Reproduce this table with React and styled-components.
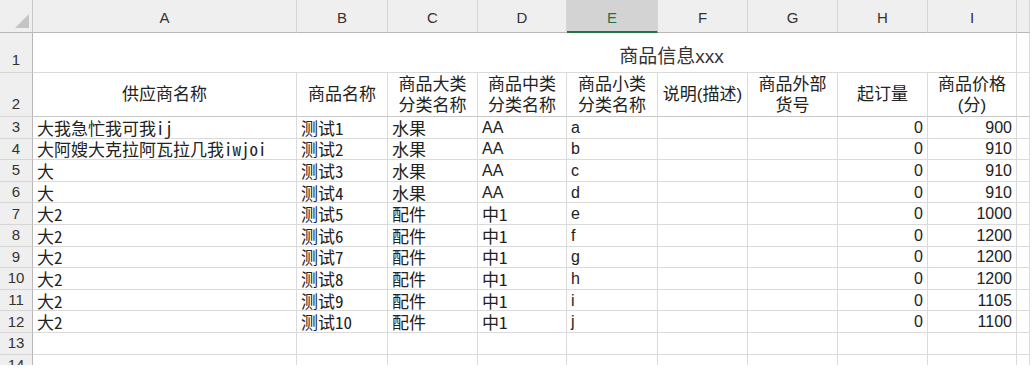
import React from "react";
import styled, { createGlobalStyle, css } from "styled-components";

const GlobalStyle = createGlobalStyle`
  html, body {
    margin: 0;
    padding: 0;
    background: #ffffff;
  }
`;

const CJK = `"Liberation Sans", "Noto Sans CJK SC", sans-serif`;
const SONG = `"Noto Sans Mono CJK SC", "Noto Sans CJK SC", "Liberation Mono", monospace`;

const COLS = ["A", "B", "C", "D", "E", "F", "G", "H", "I", ""];
const SELECTED_COL = "E";

const Sheet = styled.div`
  display: grid;
  grid-template-columns: 33px 264px 91px 90px 89px 91px 90px 90px 90px 89px 13px;
  grid-template-rows: 33px 40px 44px repeat(12, 21.6px);
  width: 1030px;
  height: 365px;
  overflow: hidden;
  background: #ffffff;
  color: #222;
`;

const Corner = styled.div`
  position: relative;
  background: #efefef;
  border-right: 1px solid #c8c8c8;
  border-bottom: 1px solid #b8b8b8;
  box-sizing: border-box;

  &::after {
    content: "";
    position: absolute;
    right: 3px;
    bottom: 4px;
    width: 14px;
    height: 14px;
    background: #c4c4c4;
    clip-path: polygon(100% 0, 100% 100%, 0 100%);
  }
`;

const ColHeader = styled.div`
  display: flex;
  align-items: center;
  justify-content: center;
  box-sizing: border-box;
  background: #efefef;
  border-right: 1px solid #d6d6d6;
  border-bottom: 1px solid #b8b8b8;
  font-family: "Liberation Sans", Arial, sans-serif;
  font-size: 15px;
  color: #333;
  padding-top: 2px;

  ${(p) =>
    p.$selected &&
    css`
      background: #d3d3d3;
      color: #217346;
      border-bottom: 2px solid #217346;
      padding-top: 3px;
    `}
`;

const RowHeader = styled.div`
  display: flex;
  justify-content: center;
  align-items: ${(p) => (p.$tall ? "flex-end" : "center")};
  padding-bottom: ${(p) => (p.$tall ? "3px" : "0")};
  box-sizing: border-box;
  background: #efefef;
  border-right: 1px solid #b8b8b8;
  border-bottom: 1px solid #d6d6d6;
  font-family: "Liberation Sans", Arial, sans-serif;
  font-size: 15px;
  line-height: 18px;
  color: #333;
`;

const TitleCell = styled.div`
  grid-column: 2 / span 9;
  display: flex;
  align-items: center;
  justify-content: center;
  padding: 4px 0 0 294px;
  box-sizing: border-box;
  border-right: 1px solid #dadada;
  border-bottom: 1px solid #dadada;
  font-family: ${CJK};
  font-size: 19px;
  color: #333;
`;

const HeadCell = styled.div`
  display: flex;
  align-items: center;
  justify-content: center;
  text-align: center;
  box-sizing: border-box;
  border-right: 1px solid #dadada;
  border-bottom: 1px solid #c8c8c8;
  font-family: ${CJK};
  font-size: 17px;
  line-height: 21px;
  color: #222;
  white-space: pre-line;
`;

const Cell = styled.div`
  display: flex;
  align-items: center;
  justify-content: ${(p) => (p.$align === "right" ? "flex-end" : "flex-start")};
  padding: 1px 4px 0;
  box-sizing: border-box;
  border-right: 1px solid #dadada;
  border-bottom: 1px solid #dadada;
  font-family: ${(p) => (p.$song ? SONG : `"Liberation Sans", Arial, sans-serif`)};
  font-size: ${(p) => (p.$song ? "17px" : "16px")};
  line-height: 20px;
  white-space: nowrap;
  color: #222;
`;

const HEADINGS = [
  "供应商名称",
  "商品名称",
  "商品大类\n分类名称",
  "商品中类\n分类名称",
  "商品小类\n分类名称",
  "说明(描述)",
  "商品外部\n货号",
  "起订量",
  "商品价格\n(分)",
];

const ITEMS = [
  ["大我急忙我可我ij", "测试1", "水果", "AA", "a", 0, 900],
  ["大阿嫂大克拉阿瓦拉几我iwjoi", "测试2", "水果", "AA", "b", 0, 910],
  ["大", "测试3", "水果", "AA", "c", 0, 910],
  ["大", "测试4", "水果", "AA", "d", 0, 910],
  ["大2", "测试5", "配件", "中1", "e", 0, 1000],
  ["大2", "测试6", "配件", "中1", "f", 0, 1200],
  ["大2", "测试7", "配件", "中1", "g", 0, 1200],
  ["大2", "测试8", "配件", "中1", "h", 0, 1200],
  ["大2", "测试9", "配件", "中1", "i", 0, 1105],
  ["大2", "测试10", "配件", "中1", "j", 0, 1100],
];

const isLatin = (s) => /^[A-Za-z0-9]+$/.test(s);

function ItemRow({ n, item }) {
  const [supplier, name, big, mid, small, minQty, price] = item;
  return (
    <>
      <RowHeader>{n}</RowHeader>
      <Cell $song>{supplier}</Cell>
      <Cell $song>{name}</Cell>
      <Cell $song>{big}</Cell>
      <Cell $song={!isLatin(mid)}>{mid}</Cell>
      <Cell>{small}</Cell>
      <Cell />
      <Cell />
      <Cell $align="right">{minQty}</Cell>
      <Cell $align="right">{price}</Cell>
      <Cell />
    </>
  );
}

function BlankRow({ n }) {
  return (
    <>
      <RowHeader>{n}</RowHeader>
      {COLS.map((c, i) => (
        <Cell key={i} />
      ))}
    </>
  );
}

export default function App() {
  return (
    <>
      <GlobalStyle />
      <Sheet>
        <Corner />
        {COLS.map((c, i) => (
          <ColHeader key={i} $selected={c === SELECTED_COL}>
            {c}
          </ColHeader>
        ))}

        <RowHeader $tall>1</RowHeader>
        <TitleCell>商品信息xxx</TitleCell>
        <Cell />

        <RowHeader $tall>2</RowHeader>
        {HEADINGS.map((h, i) => (
          <HeadCell key={i}>{h}</HeadCell>
        ))}
        <HeadCell />

        {ITEMS.map((item, i) => (
          <ItemRow key={i} n={i + 3} item={item} />
        ))}
        <BlankRow n={13} />
        <BlankRow n={14} />
      </Sheet>
    </>
  );
}
